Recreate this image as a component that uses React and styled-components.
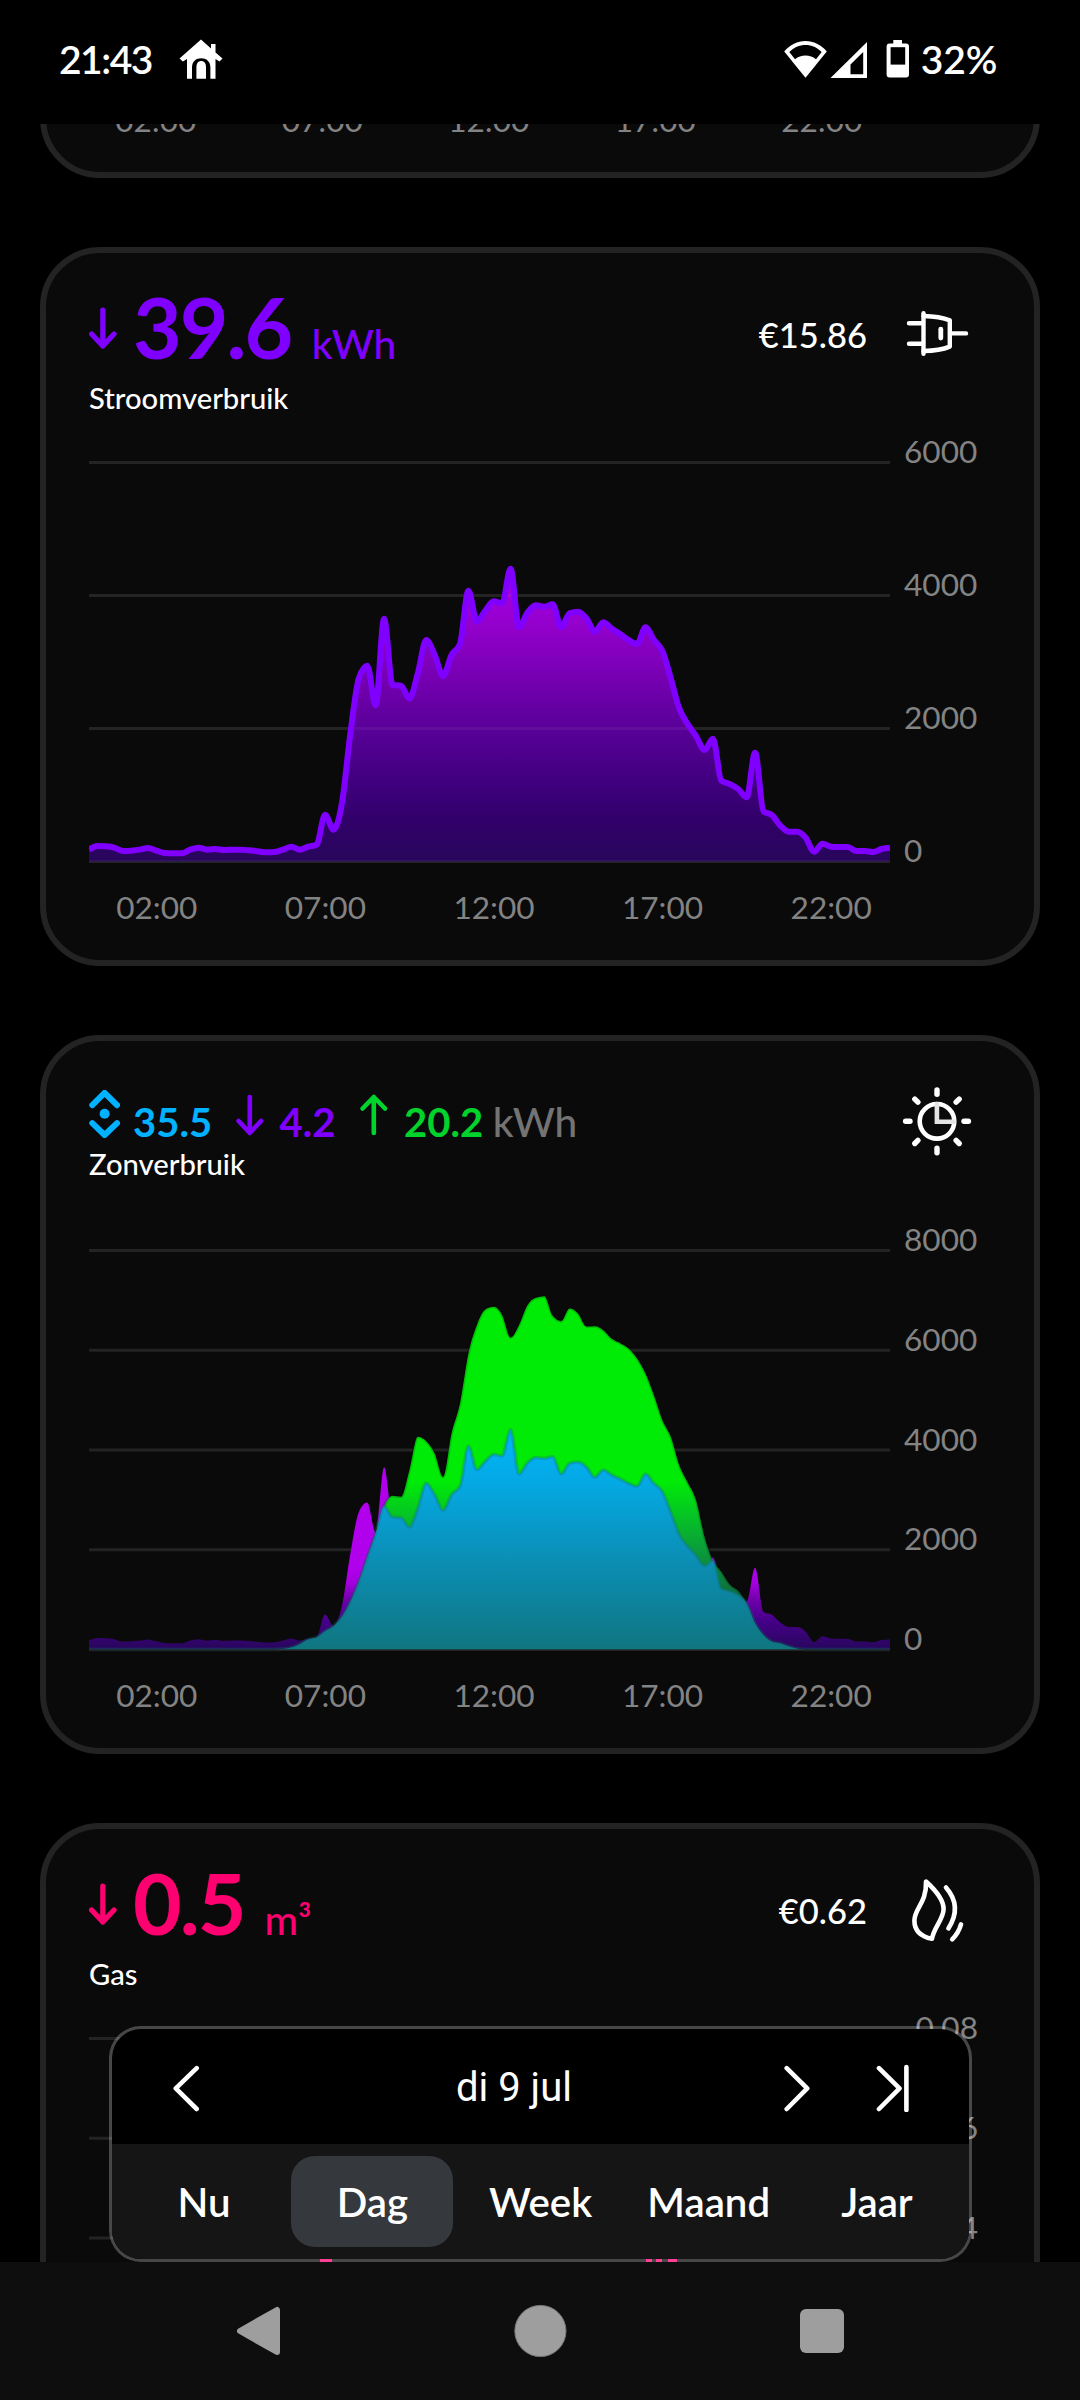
import React from "react";
import styled, { createGlobalStyle } from "styled-components";

const GlobalStyle = createGlobalStyle`
  * { box-sizing: border-box; }
  html, body { margin: 0; padding: 0; background: #000; }
  svg { display: block; flex: none; }
`;

const VIOLET = "#8000ff";
const PINK = "#ff0070";
const BLUE = "#00b2ff";
const GREEN = "#00d42c";

/* ---------- data: one sample per 15 minutes ---------- */

const consumption = [
  183, 233, 228, 208, 158, 163, 178, 203, 163, 128, 123, 123, 178, 208, 178, 188,
  173, 178, 178, 168, 153, 138, 143, 178, 223, 178, 223, 253, 704, 479, 880, 1927,
  2754, 2945, 2348, 3652, 2654, 2644, 2454, 2830, 3331, 3105, 2789, 3105, 3271, 4073, 3607, 3772,
  3912, 3882, 4404, 3521, 3742, 3852, 3832, 3867, 3521, 3732, 3757, 3657, 3456, 3597, 3501, 3421,
  3331, 3271, 3521, 3331, 3165, 2754, 2303, 2068, 1887, 1677, 1847, 1216, 1165, 1090, 965, 1637,
  754, 699, 539, 449, 449, 358, 148, 268, 223, 218, 218, 158, 158, 143, 188, 208,
];

const solar = [
  0, 0, 0, 0, 0, 0, 0, 0, 0, 0, 0, 0, 0, 0, 0, 0,
  0, 0, 0, 0, 0, 0, 0, 10, 38, 105, 200, 241, 368, 468, 655, 956,
  1357, 1845, 2326, 2874, 3081, 3061, 3595, 4264, 4177, 3930, 3462, 4331, 4932, 5935, 6503, 6817,
  6870, 6703, 6255, 6503, 6904, 7051, 7084, 6690, 6583, 6837, 6737, 6476, 6482, 6402, 6229, 6142,
  6035, 5834, 5534, 5099, 4598, 4264, 3696, 3348, 2994, 2259, 1778, 1557, 1303, 1176, 922, 521,
  287, 154, 120, 60, 13, 0, 0, 0, 0, 0, 0, 0, 0, 0, 0, 0,
];

const selfUse = consumption.map((v, i) => Math.min(v, solar[i]));

/* ---------- plot geometry ---------- */

const PLOT_W = 801;
const PLOT_H = 430;
const TOP = 25.5;
const BASE = 424.5;

function curve(values, max) {
  const step = PLOT_W / (values.length - 1);
  const y = values.map((v) => BASE - (v / max) * (BASE - TOP));
  const n = y.length;
  const slope = [];
  for (let i = 0; i < n - 1; i++) slope.push((y[i + 1] - y[i]) / step);
  const m = y.map((_, i) => {
    if (i === 0) return slope[0];
    if (i === n - 1) return slope[n - 2];
    const a = slope[i - 1];
    const b = slope[i];
    if (a * b <= 0) return 0;
    return Math.sign(a) * 2 * Math.min(Math.abs(a), Math.abs(b), Math.abs(a + b) / 4);
  });
  let d = `M0 ${y[0].toFixed(2)}`;
  for (let i = 0; i < n - 1; i++) {
    const x0 = i * step;
    const x1 = x0 + step;
    d += `C${(x0 + step / 3).toFixed(2)} ${(y[i] + (m[i] * step) / 3).toFixed(2)} ${(x1 - step / 3).toFixed(2)} ${(
      y[i + 1] - (m[i + 1] * step) / 3
    ).toFixed(2)} ${x1.toFixed(2)} ${y[i + 1].toFixed(2)}`;
  }
  return d;
}

const area = (values, max) => `${curve(values, max)}V${BASE}H0Z`;

/* ---------- shell ---------- */

const Screen = styled.div`
  width: 1080px;
  height: 2400px;
  display: flex;
  flex-direction: column;
  overflow: hidden;
  background: #000;
  color: #fff;
  font-family: Lato, "Liberation Sans", sans-serif;
`;

const StatusBar = styled.header`
  flex: none;
  height: 124px;
  padding: 36px 82.5px 0 59px;
  display: flex;
  justify-content: space-between;
  align-items: flex-start;
`;

const StatusGroup = styled.div`
  display: flex;
  align-items: center;
  gap: ${(p) => p.$gap}px;
  height: 46px;
`;

const StatusText = styled.span`
  font-weight: 600;
  font-size: 39px;
  line-height: 46px;
  letter-spacing: ${(p) => p.$track || "0"};
`;

const Viewport = styled.main`
  position: relative;
  flex: 1;
  min-height: 0;
  overflow: hidden;
`;

const Feed = styled.div`
  display: flex;
  flex-direction: column;
  gap: 69px;
  margin: -665px 40px 0;
`;

/* ---------- card ---------- */

const Card = styled.section`
  flex: none;
  height: 719px;
  display: flex;
  flex-direction: column;
  justify-content: ${(p) => (p.$tail ? "flex-end" : "flex-start")};
  padding: 0 0 ${(p) => (p.$tail ? "32px" : "0")} 43px;
  border: 6px solid #232323;
  border-radius: 60px;
  background: #0a0a0a;
`;

const CardHead = styled.div`
  flex: none;
  height: 184px;
  width: 883px;
  display: flex;
  justify-content: space-between;
`;

const Summary = styled.div`
  padding-top: ${(p) => p.$top}px;
`;

const ValueRow = styled.div`
  display: flex;
  align-items: baseline;
  height: ${(p) => p.$h}px;
`;

const BigValue = styled.span`
  font-size: 84px;
  line-height: 84px;
  font-weight: 700;
  letter-spacing: -2px;
  color: ${(p) => p.$color};
  margin-left: 16px;
`;

const Unit = styled.span`
  font-size: 40.6px;
  line-height: 48px;
  font-weight: 500;
  color: ${(p) => p.$color};
  margin-left: ${(p) => p.$gap}px;
`;

const MidValue = styled.span`
  font-size: 40px;
  line-height: 48px;
  font-weight: 700;
  color: ${(p) => p.$color};
  margin: 0 ${(p) => p.$after}px 0 ${(p) => p.$before}px;
`;

const CardLabel = styled.div`
  font-size: 29.2px;
  line-height: 34px;
  font-weight: 500;
  margin-top: ${(p) => p.$gap}px;
`;

const Aside = styled.div`
  display: flex;
  align-items: center;
  gap: 35px;
  height: 70px;
  margin-top: 46px;
`;

const Price = styled.span`
  font-size: 34.5px;
  line-height: 40px;
  font-weight: 500;
  padding-top: 2px;
`;

/* ---------- chart ---------- */

const ChartRow = styled.div`
  flex: none;
  display: flex;
  gap: 14px;
  height: ${PLOT_H}px;
`;

const YAxis = styled.div`
  display: flex;
  flex-direction: column;
  justify-content: space-between;
  width: 74px;
  height: 439px;
  margin-top: -6px;
  text-align: ${(p) => p.$align || "left"};
`;

const Tick = styled.span`
  font-size: 31.6px;
  line-height: 40px;
  color: #838383;
`;

const XAxis = styled.div`
  flex: none;
  display: flex;
  margin: 20px 0 0 -16.5px;
`;

const XTick = styled(Tick)`
  width: ${(p) => p.$step}px;
  text-align: center;
`;

function TimeAxis({ step = 168.6 }) {
  return (
    <XAxis>
      {["02:00", "07:00", "12:00", "17:00", "22:00"].map((t) => (
        <XTick key={t} $step={step}>{t}</XTick>
      ))}
    </XAxis>
  );
}

function Grid({ lines, color = "#232323" }) {
  return Array.from({ length: lines }, (_, i) => {
    const y = TOP + ((BASE - TOP) * i) / (lines - 1);
    return <line key={i} x1="0" x2={PLOT_W} y1={y} y2={y} stroke={color} strokeWidth="3" />;
  });
}

function Chart({ ticks, align, children }) {
  return (
    <ChartRow>
      <svg width={PLOT_W} height={PLOT_H} viewBox={`0 0 ${PLOT_W} ${PLOT_H}`}>{children}</svg>
      <YAxis $align={align}>
        {ticks.map((t) => (
          <Tick key={t}>{t}</Tick>
        ))}
      </YAxis>
    </ChartRow>
  );
}

function Fade({ id, stops }) {
  return (
    <linearGradient id={id} gradientUnits="userSpaceOnUse" x1="0" x2="0" y1="0" y2={PLOT_H}>
      {stops.map(([y, c]) => (
        <stop key={y} offset={y / PLOT_H} stopColor={c} />
      ))}
    </linearGradient>
  );
}

/* ---------- icons ---------- */

const stroke = { fill: "none", strokeLinecap: "round", strokeLinejoin: "round" };

function Arrow({ color, up, width = 5.2 }) {
  return (
    <svg width="28" height="42" viewBox="0 0 28 42" {...stroke} stroke={color} strokeWidth={width}>
      {up ? <path d="M13.8 39V3M2.6 14.5L13.8 3L25 14.5" /> : <path d="M13.8 3V39M2.6 27L13.8 39L25 27" />}
    </svg>
  );
}

const InlineIcon = styled.div`
  align-self: flex-start;
  margin-top: ${(p) => p.$top}px;
`;

function SelfUseIcon() {
  return (
    <svg width="31" height="48" viewBox="89 1090 31 48" {...stroke} stroke={BLUE} strokeWidth="6">
      <path d="M92.3 1105.2L104.6 1092.8L117 1105.2M92.3 1123.2L104.6 1135L117 1123.2" />
      <circle cx="104.6" cy="1113.8" r="5" fill={BLUE} stroke="none" />
    </svg>
  );
}

function PlugIcon() {
  return (
    <svg width="70" height="70" viewBox="902 299 70 70" {...stroke} stroke="#fff" strokeWidth="4.4">
      <path d="M923.5 313.2V353.8" />
      <path d="M923.5 316C934 316.2 943 317.6 949.8 320.4V346.6C943 349.4 934 350.8 923.5 351" />
      <path d="M909 323.3H923M909 343.7H923M950 333.4H966" />
      <path d="M940.8 329.2V338" strokeWidth="4.8" />
    </svg>
  );
}

function SunClockIcon() {
  const rays = [0, 45, 90, 135, 180, 225, 270, 315];
  return (
    <svg width="70" height="70" viewBox="901.3 1087 70 70" {...stroke} stroke="#fff" strokeWidth="4.6">
      <circle cx="936.3" cy="1121.3" r="17.3" />
      <path d="M936.2 1104V1121.8H953" stroke="#e4e4e4" strokeLinejoin="miter" />
      {rays.map((a) => (
        <path key={a} d="M936.3 1089.9V1094.3" strokeWidth="5.4" transform={`rotate(${a} 936.3 1121.3)`} />
      ))}
    </svg>
  );
}

function FlameIcon() {
  return (
    <svg width="70" height="70" viewBox="902 1875 70 70" {...stroke} stroke="#fff" strokeWidth="4.6">
      <path d="M926 1881.5C937 1891.5 943.6 1900.5 943.6 1909C943.6 1919 933.5 1928 932 1938.8C920 1936.5 914.4 1930 914.4 1920.5C914.4 1908.5 926.8 1903 926 1881.5Z" />
      <path d="M946 1887.5C957.4 1900.5 958 1913.5 948.4 1928.4" />
      <path d="M961 1924.4Q958.6 1933 952.2 1939.4" />
    </svg>
  );
}

/* ---------- period picker ---------- */

const Picker = styled.div`
  position: absolute;
  left: 109px;
  top: 1902px;
  width: 863px;
  height: 236px;
  display: flex;
  flex-direction: column;
  border: 3px solid rgba(255, 255, 255, 0.25);
  border-radius: 32px;
  background: #000;
  background-clip: padding-box;
`;

const DateRow = styled.div`
  height: 115px;
  display: grid;
  grid-template-columns: 135px 1fr 116px 106px;
  align-items: center;
  padding: 3px 0 0;
`;

const DateText = styled.span`
  padding-left: 209px;
  font-family: Roboto, sans-serif;
  font-size: 40px;
  line-height: 48px;
  white-space: nowrap;
`;

const Step = styled.div`
  padding-left: ${(p) => p.$left}px;
`;

const Tabs = styled.div`
  flex: 1;
  display: flex;
  padding: 12px 8px;
  background: #151515;
  border-radius: 0 0 29px 29px;
`;

const Tab = styled.div`
  flex: 1;
  margin: 0 3px;
  height: 91px;
  border-radius: 24px;
  background: ${(p) => (p.$active ? "#35383d" : "transparent")};
  font-size: 40.2px;
  font-weight: 600;
  line-height: 92px;
  text-align: center;
`;

/* ---------- navigation bar ---------- */

const NavBar = styled.nav`
  flex: none;
  height: 138px;
  padding: 0 235px;
  display: flex;
  align-items: center;
  justify-content: space-between;
  background: #0e0e0e;
`;

export default function App() {
  return (
    <Screen>
      <GlobalStyle />
      <StatusBar>
        <StatusGroup $gap={27}>
          <StatusText $track="-1.5px">21:43</StatusText>
          <svg width="44" height="42" viewBox="179 39 44 42">
            <path
              d="M201 40.5L211 49.5V45H215.5V53.5L222.5 59.5L219.5 62.5L215.5 60V79.7H210.4V68.5C210.4 62.5 206.5 59.2 201.2 59.2S192 62.5 192 68.5V79.7H187V60L182.8 62.5L179.5 59.5Z"
              fill="#fff"
            />
            <path d="M196.4 79.7V68.5C196.4 64 198.4 62 201.2 62S206 64 206 68.5V79.7Z" fill="#fff" />
          </svg>
        </StatusGroup>
        <StatusGroup $gap={11}>
          <svg width="126" height="40" viewBox="783 39 126 40">
            <path d="M804.5 77.8L783.2 51.5C789 44.8 796.5 41 804.5 41S820 44.8 825.8 51.5Z" fill="#fff" />
            <path d="M788.3 52C793 47.6 798.3 45 804.5 45S816 47.6 820.7 52L815 59.2C812 56.7 808.5 55.5 804.5 55.5S797 56.7 794 59.2Z" fill="#000" />
            <path d="M829.5 78L866 42V78Z" fill="#fff" />
            <path d="M849.5 74.2V64.5L862.2 52V74.2Z" fill="#000" />
            <path d="M892.3 40H901V43.5H905Q908 43.5 908 46.5V74.4Q908 77.4 905 77.4H888.6Q885.6 77.4 885.6 74.4V46.5Q885.6 43.5 888.6 43.5H892.3Z" fill="#fff" />
            <rect x="889.6" y="47.2" width="14.6" height="17.4" fill="#000" />
          </svg>
          <StatusText>32%</StatusText>
        </StatusGroup>
      </StatusBar>

      <Viewport>
        <Feed>
          <Card $tail>
            <TimeAxis step={166.5} />
          </Card>

          <Card>
            <CardHead>
              <Summary $top={32}>
                <ValueRow $h={84}>
                  <InlineIcon $top={22}><Arrow color={VIOLET} /></InlineIcon>
                  <BigValue $color={VIOLET}>39.6</BigValue>
                  <Unit $color={VIOLET} $gap={20.5}>kWh</Unit>
                </ValueRow>
                <CardLabel $gap={12}>Stroomverbruik</CardLabel>
              </Summary>
              <Aside>
                <Price>€15.86</Price>
                <PlugIcon />
              </Aside>
            </CardHead>
            <Chart ticks={["6000", "4000", "2000", "0"]}>
              <defs>
                <Fade id="use" stops={[[130, "#ab00e6"], [183, "#9600cf"], [290, "#5a0099"], [343, "#410080"], [383, "#310069"], [424, "#28065c"]]} />
              </defs>
              <Grid lines={4} color="#191919" />
              <path d={area(consumption, 6000)} fill="url(#use)" />
              <Grid lines={4} color="rgba(255,255,255,0.05)" />
              <path d={curve(consumption, 6000)} fill="none" stroke={VIOLET} strokeWidth="6" strokeLinejoin="round" />
            </Chart>
            <TimeAxis />
          </Card>

          <Card>
            <CardHead>
              <Summary $top={57}>
                <ValueRow $h={48}>
                  <InlineIcon $top={-8}><SelfUseIcon /></InlineIcon>
                  <MidValue $color={BLUE} $before={13} $after={24}>35.5</MidValue>
                  <InlineIcon $top={-4}><Arrow color={VIOLET} width={4.6} /></InlineIcon>
                  <MidValue $color={VIOLET} $before={15.5} $after={24.5}>4.2</MidValue>
                  <InlineIcon $top={-4}><Arrow color={GREEN} width={4.6} up /></InlineIcon>
                  <MidValue $color={GREEN} $before={16} $after={9.5}>20.2</MidValue>
                  <Unit $color="#737373" $gap={0}>kWh</Unit>
                </ValueRow>
                <CardLabel $gap={1}>Zonverbruik</CardLabel>
              </Summary>
              <Aside><SunClockIcon /></Aside>
            </CardHead>
            <Chart ticks={["8000", "6000", "4000", "2000", "0"]}>
              <defs>
                <Fade id="grid-in" stops={[[344, "#b000ec"], [358, "#a400dd"], [376, "#6c00a8"], [395, "#46008a"], [424, "#28065c"]]} />
                <Fade id="feed-in" stops={[[256, "#00ec06"], [290, "#05c524"], [325, "#0a9c3a"], [370, "#0c703c"]]} />
                <Fade id="self" stops={[[205, "#00b6fc"], [260, "#04a8e2"], [330, "#0a90b8"], [424, "#107680"]]} />
              </defs>
              <Grid lines={5} />
              <path d={area(consumption, 8000)} fill="url(#grid-in)" />
              <path d={area(solar, 8000)} fill="url(#feed-in)" />
              <path d={curve(solar, 8000)} fill="none" stroke="#000" strokeOpacity="0.18" strokeWidth="3" />
              <path d={area(selfUse, 8000)} fill="url(#self)" />
              <path d={curve(selfUse, 8000)} fill="none" stroke="#107680" strokeOpacity="0.35" strokeWidth="3.5" />
              <line x1="0" x2={PLOT_W} y1="425.2" y2="425.2" stroke="#232323" strokeWidth="1.6" />
            </Chart>
            <TimeAxis />
          </Card>

          <Card>
            <CardHead>
              <Summary $top={32}>
                <ValueRow $h={84}>
                  <InlineIcon $top={22}><Arrow color={PINK} /></InlineIcon>
                  <BigValue $color={PINK}>0.5</BigValue>
                  <Unit $color={PINK} $gap={20}>m³</Unit>
                </ValueRow>
                <CardLabel $gap={12}>Gas</CardLabel>
              </Summary>
              <Aside>
                <Price>€0.62</Price>
                <FlameIcon />
              </Aside>
            </CardHead>
            <Chart ticks={["0.08", "0.06", "0.04", "0.02", "0"]} align="right">
              <Grid lines={5} />
              {[[231, 12], [557, 6], [567, 6], [579, 9]].map(([x, w]) => (
                <rect key={x} x={x} y="237" width={w} height={BASE - 237} fill={PINK} />
              ))}
            </Chart>
          </Card>
        </Feed>

        <Picker>
          <DateRow>
            <Step $left={61}>
              <svg width="28" height="48" viewBox="173 2062 28 48" {...stroke} stroke="#fff" strokeWidth="4.6">
                <path d="M196.7 2066.2L175.8 2086.4L196.7 2107" />
              </svg>
            </Step>
            <DateText>di 9 jul</DateText>
            <Step $left={37}>
              <svg width="28" height="48" viewBox="784 2062 28 48" {...stroke} stroke="#fff" strokeWidth="4.6">
                <path d="M786.7 2066.2L807.2 2086.4L786.7 2107" />
              </svg>
            </Step>
            <Step $left={13}>
              <svg width="36" height="48" viewBox="876 2062 36 48" {...stroke} stroke="#fff" strokeWidth="4.6">
                <path d="M879 2066.2L899.5 2086.4L879 2107M906.4 2065V2108" />
              </svg>
            </Step>
          </DateRow>
          <Tabs>
            {["Nu", "Dag", "Week", "Maand", "Jaar"].map((t) => (
              <Tab key={t} $active={t === "Dag"}>{t}</Tab>
            ))}
          </Tabs>
        </Picker>
      </Viewport>

      <NavBar>
        <svg width="46" height="54" viewBox="0 0 46 54">
          <path d="M5 27L42 6V48Z" fill="#9e9e9e" stroke="#9e9e9e" strokeWidth="6" strokeLinejoin="round" />
        </svg>
        <svg width="54" height="54" viewBox="0 0 54 54">
          <circle cx="27.4" cy="27" r="25.6" fill="#9e9e9e" stroke="#777" strokeWidth="1" />
        </svg>
        <svg width="46" height="54" viewBox="0 0 46 54">
          <rect x="1" y="5" width="44" height="44" rx="6" fill="#9e9e9e" />
        </svg>
      </NavBar>
    </Screen>
  );
}
